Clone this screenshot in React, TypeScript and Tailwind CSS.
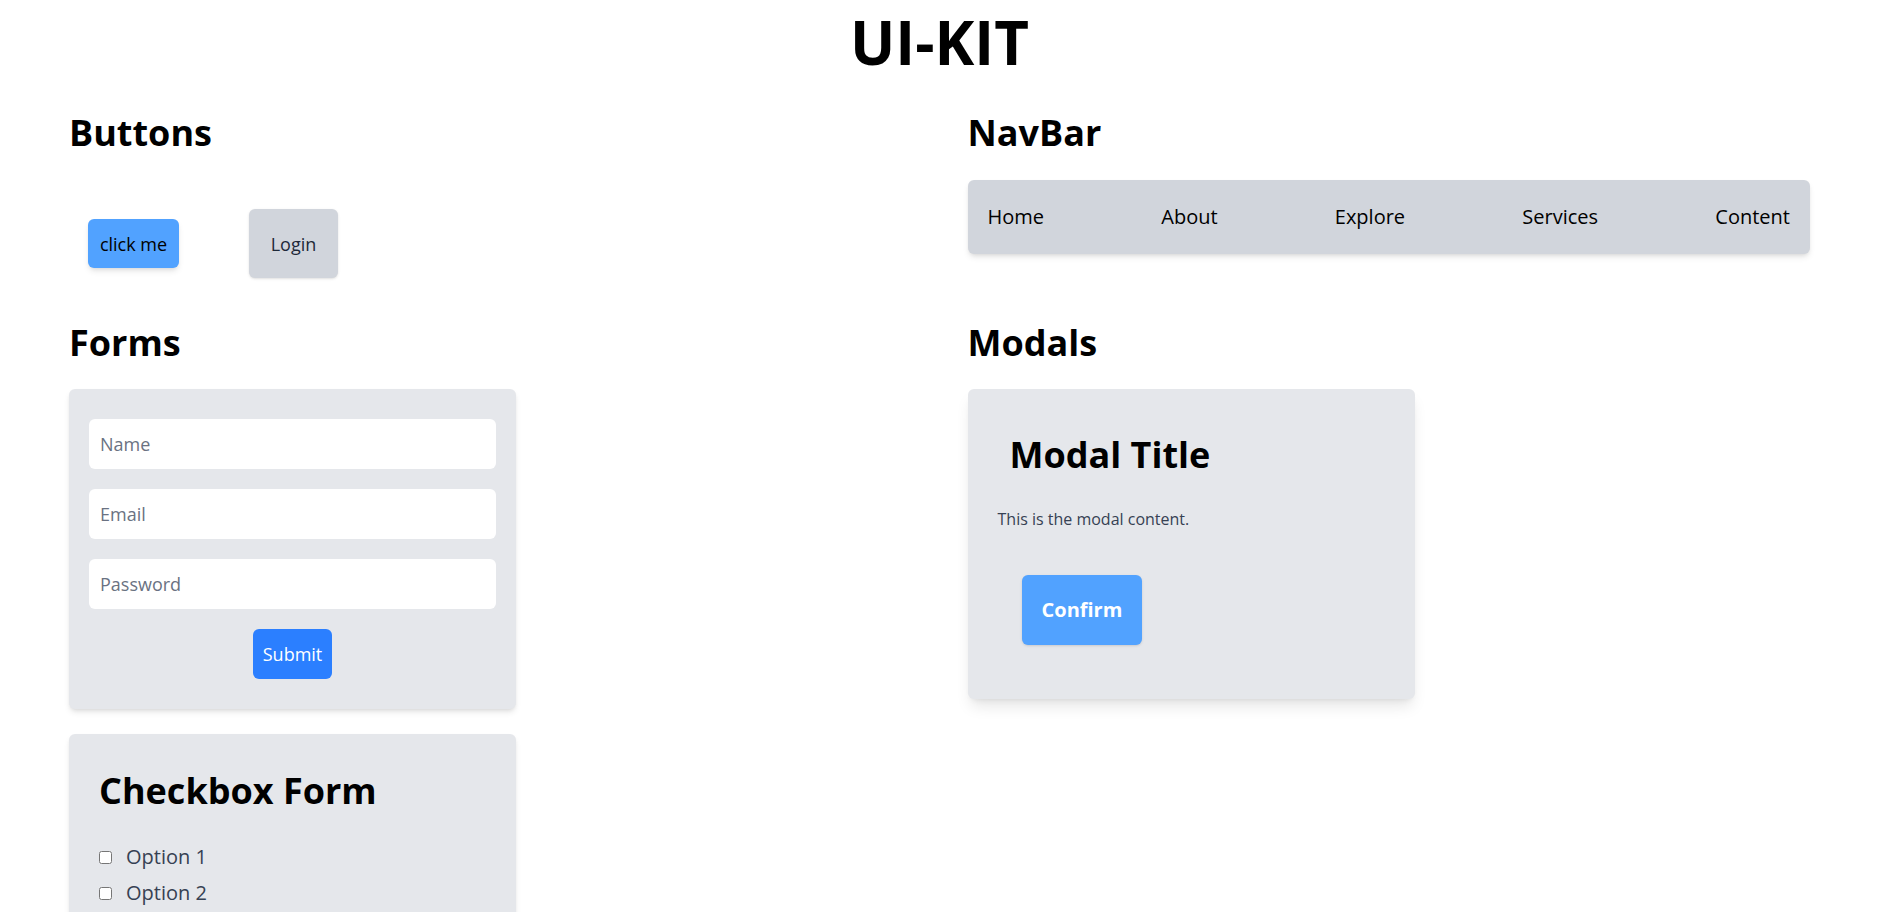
const navItems = ["Home", "About", "Explore", "Services", "Content"];

function SectionTitle({ children }: { children: React.ReactNode }) {
  return <h2 className="text-4xl leading-10 font-bold text-black">{children}</h2>;
}

export default function App() {
  return (
    <div
      className="min-h-screen bg-white text-black"
      style={{ fontFamily: '"Open Sans", "Noto Sans", sans-serif' }}
    >
      <h1 className="pt-3 text-center text-6xl leading-none font-bold">UI-KIT</h1>

      <div className="mt-[41px] grid grid-cols-2 gap-x-14 gap-y-[45px] px-[69px]">
        {/* Buttons */}
        <section>
          <SectionTitle>Buttons</SectionTitle>
          <div className="flex items-center gap-[70px] pt-[56px] pl-[19px]">
            <button className="h-[49px] w-[91px] rounded-md bg-blue-400 text-lg leading-7 text-black shadow-md">
              click me
            </button>
            <button className="h-[69px] w-[89px] rounded-md bg-gray-300 text-lg leading-7 text-gray-800 shadow-sm">
              Login
            </button>
          </div>
        </section>

        {/* NavBar */}
        <section>
          <SectionTitle>NavBar</SectionTitle>
          <nav className="mt-[27px] flex h-[74px] items-center justify-between rounded-md bg-gray-300 px-5 shadow-md">
            {navItems.map((item) => (
              <a key={item} href="#" className="text-xl leading-7 text-black">
                {item}
              </a>
            ))}
          </nav>
        </section>

        {/* Forms */}
        <section>
          <SectionTitle>Forms</SectionTitle>
          <div className="mt-[26px] flex w-[447px] flex-col gap-5 rounded-md bg-gray-200 px-5 py-[30px] shadow-md">
            <input
              type="text"
              placeholder="Name"
              className="rounded-md bg-white p-[11px] text-lg leading-7 placeholder:text-gray-500 outline-none"
            />
            <input
              type="email"
              placeholder="Email"
              className="rounded-md bg-white p-[11px] text-lg leading-7 placeholder:text-gray-500 outline-none"
            />
            <input
              type="password"
              placeholder="Password"
              className="rounded-md bg-white p-[11px] text-lg leading-7 placeholder:text-gray-500 outline-none"
            />
            <button className="mx-auto rounded-md bg-blue-500 px-2.5 py-[11px] text-lg leading-7 text-white">
              Submit
            </button>
          </div>

          <div className="mt-[25px] w-[447px] rounded-md bg-gray-200 px-[30px] pt-[37px] pb-[30px] shadow-md">
            <h3 className="text-4xl leading-10 font-bold">Checkbox Form</h3>
            <div className="mt-8 flex flex-col gap-2">
              {["Option 1", "Option 2", "Option 3"].map((opt) => (
                <label key={opt} className="flex items-center gap-3.5 text-xl leading-7 text-gray-700">
                  <input type="checkbox" className="h-[13px] w-[13px]" />
                  {opt}
                </label>
              ))}
            </div>
          </div>
        </section>

        {/* Modals */}
        <section>
          <SectionTitle>Modals</SectionTitle>
          <div className="mt-[26px] w-[447px] rounded-md bg-gray-200 px-[30px] pt-[34px] pb-[30px] shadow-lg">
            <h3 className="p-3 text-4xl leading-10 font-bold">Modal Title</h3>
            <p className="my-5 text-base leading-6 text-gray-700">This is the modal content.</p>
            <button className="m-6 rounded-md bg-blue-400 px-5 py-[21px] text-xl leading-7 font-bold text-white shadow-sm">
              Confirm
            </button>
          </div>
        </section>
      </div>
    </div>
  );
}
